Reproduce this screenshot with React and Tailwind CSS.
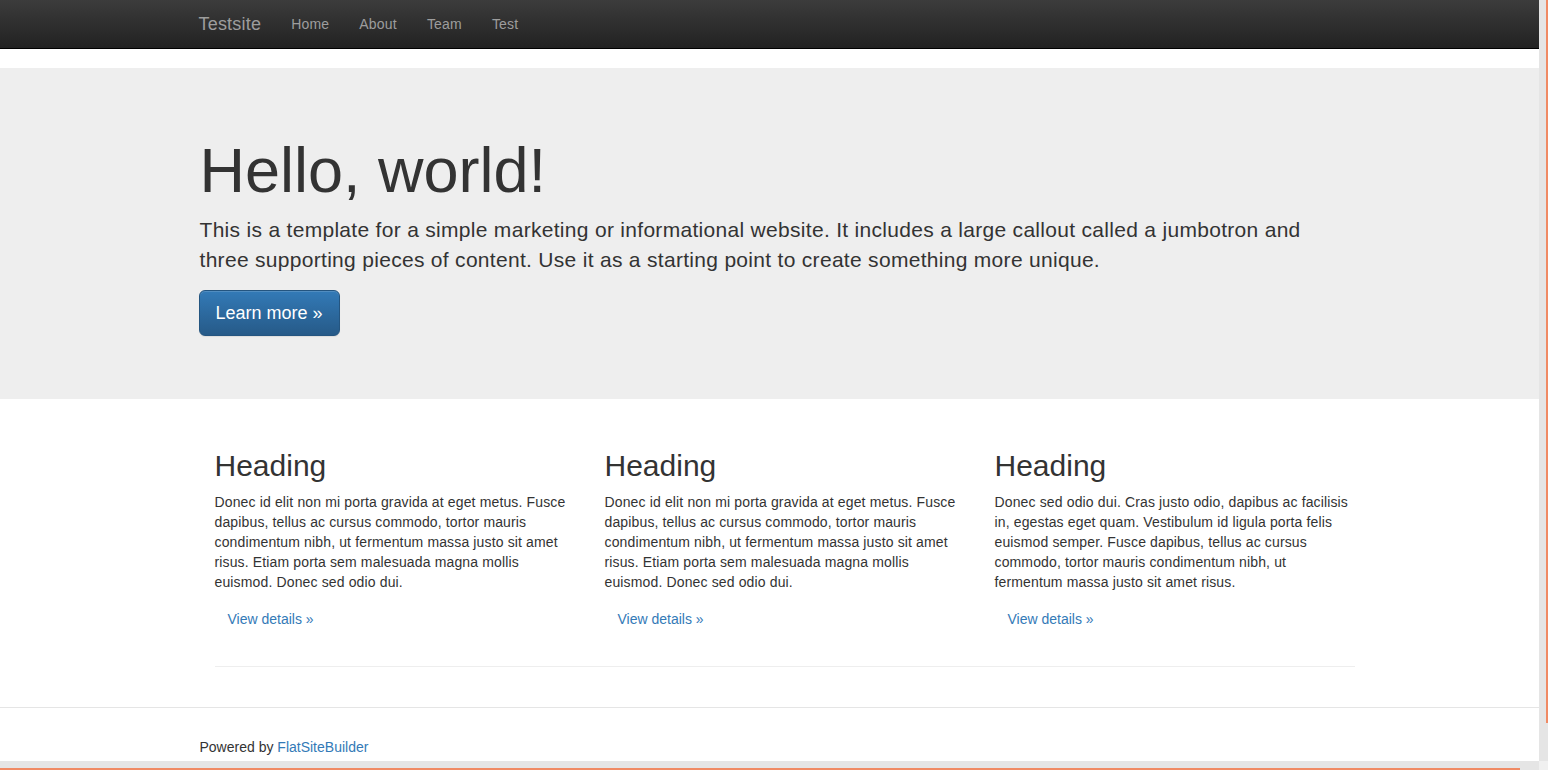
import React from 'react';

const columns = [
  'Donec id elit non mi porta gravida at eget metus. Fusce dapibus, tellus ac cursus commodo, tortor mauris condimentum nibh, ut fermentum massa justo sit amet risus. Etiam porta sem malesuada magna mollis euismod. Donec sed odio dui.',
  'Donec id elit non mi porta gravida at eget metus. Fusce dapibus, tellus ac cursus commodo, tortor mauris condimentum nibh, ut fermentum massa justo sit amet risus. Etiam porta sem malesuada magna mollis euismod. Donec sed odio dui.',
  'Donec sed odio dui. Cras justo odio, dapibus ac facilisis in, egestas eget quam. Vestibulum id ligula porta felis euismod semper. Fusce dapibus, tellus ac cursus commodo, tortor mauris condimentum nibh, ut fermentum massa justo sit amet risus.',
];

function App() {
  return (
    <div className="flex h-[770px] w-full flex-col overflow-hidden bg-white font-['Liberation_Sans',Arial,sans-serif] text-[#333]">
      <div className="flex h-[761px]">
        {/* page */}
        <div className="h-[761px] w-[1539px] shrink-0 overflow-hidden">
          <nav className="h-[49px] border-b border-black bg-gradient-to-b from-[#3c3c3c] to-[#222]">
            <div className="mx-auto flex h-[48px] w-[1170px] items-center px-[15px]">
              <a className="-ml-px pr-[15px] text-[18px] tracking-[0.2px] text-[#9d9d9d]">Testsite</a>
              {['Home', 'About', 'Team', 'Test'].map((item) => (
                <a key={item} className="px-[15px] text-[14px] tracking-[0.2px] text-[#9d9d9d]">
                  {item}
                </a>
              ))}
            </div>
          </nav>

          <div className="mt-[19px] bg-[#eee] py-[48px]">
            <div className="mx-auto w-[1170px] px-[15px]">
              <h1 className="mt-[20px] mb-[10px] text-[63px] leading-[69px] text-[#333]">Hello, world!</h1>
              <p className="mb-[15px] text-[21px] font-[200] leading-[30px] tracking-[0.3px]">
                This is a template for a simple marketing or informational website. It includes a large callout called a jumbotron and three supporting pieces of content. Use it as a starting point to create something more unique.
              </p>
              <p className="mb-[15px]">
                <a className="-ml-px inline-block rounded-[6px] border border-[#245580] bg-gradient-to-b from-[#337ab7] to-[#265a88] px-[16px] py-[10px] text-[18px] leading-[24px] text-white shadow-[inset_0_1px_0_rgba(255,255,255,0.15),0_1px_1px_rgba(0,0,0,0.075)]">
                  Learn more »
                </a>
              </p>
            </div>
          </div>

          <div className="mx-auto w-[1170px] px-[15px] pt-[30px]">
            <div className="flex w-[1170px]">
              {columns.map((text, i) => (
                <div key={i} className="w-[390px] shrink-0 px-[15px]">
                  <h2 className="mt-[20px] mb-[10px] text-[30px] leading-[33px]">Heading</h2>
                  <p className="mb-[10px] text-[14px] leading-[20px] tracking-[0.14px]">{text}</p>
                  <p className="mb-[10px]">
                    <a className="inline-block border border-transparent px-[12px] py-[6px] text-[14px] leading-[20px] text-[#337ab7]">
                      View details »
                    </a>
                  </p>
                </div>
              ))}
            </div>
            <hr className="ml-[15px] mt-[20px] mb-[20px] w-[1140px] border-t border-[#eee]" />
          </div>

          <footer className="mt-[40px] border-t border-[#e5e5e5] pt-[29px]">
            <div className="mx-auto w-[1170px] px-[15px] text-[14px] leading-[20px]">
              Powered by <a className="text-[#337ab7]">FlatSiteBuilder</a>
            </div>
          </footer>
        </div>

        {/* vertical scrollbar */}
        <div className="flex h-[761px] w-[9px] justify-end bg-[#e5e5e5]">
          <div className="h-[723px] w-[2px] bg-[#f08a64]"></div>
        </div>
      </div>

      {/* horizontal scrollbar */}
      <div className="flex h-[9px]">
        <div className="flex w-[1539px] flex-col justify-end bg-[#e5e5e5]">
          <div className="h-[2px] w-[1520px] bg-[#f08a64]"></div>
        </div>
        <div className="w-[9px] bg-[#f0f0f0]"></div>
      </div>
    </div>
  );
}

export default App;
